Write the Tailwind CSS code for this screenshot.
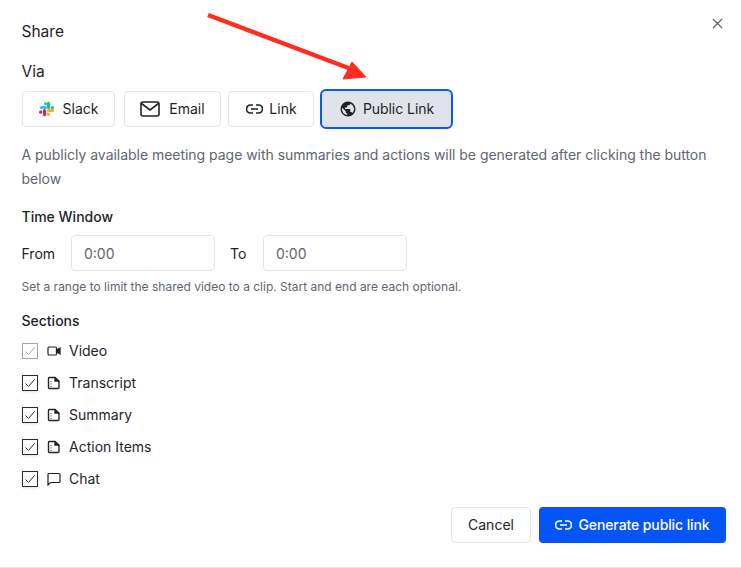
<!DOCTYPE html>
<html lang="en">
<head>
  <meta charset="UTF-8">
  <title>Share</title>
  <script src="https://cdn.jsdelivr.net/npm/@tailwindcss/browser@4"></script>
</head>
<body class="bg-white">
  <div class="relative w-[741px] h-[568px] overflow-hidden border-b border-[#e4e5e9] font-['Inter','Liberation_Sans',sans-serif] text-[#1f2329]">
    <!-- close -->
    <button class="absolute left-[712px] top-[18px] text-[#5b6070]">
      <svg class="w-[11px] h-[11px]" viewBox="0 0 11 11" fill="none" stroke="currentColor" stroke-width="1.2"><path d="M1 1l9 9M10 1l-9 9"/></svg>
    </button>

    <!-- annotation arrow -->
    <svg class="absolute left-0 top-0 pointer-events-none" width="741" height="568" fill="none">
      <path d="M208 15L351 69" stroke="#ff2d20" stroke-width="4.5"/>
      <path d="M366 77L343 79L352 62Z" fill="#ff2d20" stroke="#ff2d20" stroke-width="1"/>
    </svg>

    <div class="pl-[22px] pr-[15px] flex flex-col">
      <h2 class="mt-[22px] h-[20px] leading-[20px] text-[15.5px] -ml-[0.5px]">Share</h2>
      <div class="mt-[20px] h-[20px] leading-[20px] text-[15.5px] -ml-[0.5px]">Via</div>

      <div class="mt-[7px] h-[40px] flex items-center">
        <button class="w-[93px] h-[36px] pb-px flex items-center justify-center gap-[8px] border border-[#e4e5e9] rounded-[4px] text-[14px]">
          <svg class="w-[16px] h-[16px]" viewBox="0 0 16 16">
            <path d="M1.6 9.6a1.6 1.6 0 1 0 1.6 1.6V9.6H1.6z M4 9.6a1.5 1.5 0 0 1 3.2 0v4.1a1.6 1.6 0 1 1-3.2 0z" fill="#e01e5a"/>
            <path d="M6.4 1a1.6 1.6 0 1 0 0 3.2H8V2.6A1.6 1.6 0 0 0 6.4 1z M6.4 4.9H2.3a1.6 1.6 0 1 0 0 3.2h4.1a1.6 1.6 0 1 0 0-3.2z" fill="#36c5f0"/>
            <path d="M15 6.5a1.6 1.6 0 1 0-3.2 0v1.6h1.6A1.6 1.6 0 0 0 15 6.5z M11.1 6.4V2.3a1.6 1.6 0 1 0-3.2 0v4.1a1.6 1.6 0 1 0 3.2 0z" fill="#2eb67d"/>
            <path d="M9.5 15a1.6 1.6 0 1 0 0-3.2H7.9v1.6A1.6 1.6 0 0 0 9.5 15z M9.5 11.1h4.1a1.6 1.6 0 1 0 0-3.2H9.5a1.6 1.6 0 1 0 0 3.2z" fill="#ecb22e"/>
          </svg>
          <span>Slack</span>
        </button>
        <button class="ml-[9px] w-[97px] h-[36px] pb-px flex items-center justify-center gap-[9px] border border-[#e4e5e9] rounded-[4px] text-[14px]">
          <svg class="w-[20px] h-[16px]" viewBox="0 0 20 16" fill="none" stroke="#1f2329" stroke-width="1.6"><rect x="1" y="1" width="18" height="14" rx="2"/><path d="M1.5 2.5L10 9l8.5-6.5"/></svg>
          <span>Email</span>
        </button>
        <button class="ml-[7px] w-[86px] h-[36px] pb-px pl-px flex items-center justify-center gap-[6px] border border-[#e4e5e9] rounded-[4px] text-[14px]">
          <svg class="w-[17px] h-[10px]" viewBox="0 0 17 10" fill="none" stroke="#1f2329" stroke-width="1.7"><path d="M7 1H4.500a4 4 0 0 0 0 8H7M10 1h2.500a4 4 0 0 1 0 8H10M5 5h7"/></svg>
          <span>Link</span>
        </button>
        <button class="ml-[6px] w-[133px] h-[40px] pb-px flex items-center justify-center gap-[6px] border-2 border-[#0b57f5] rounded-[6px] bg-[#e0e3e9] text-[14px]">
          <svg class="w-[18px] h-[18px]" viewBox="0 0 24 24" fill="#1f2329"><path d="M12 2a10 10 0 1 0 0 20 10 10 0 0 0 0-20zM4 12c0-.6.1-1.200.2-1.800L9 15v1c0 1.100.9 2 2 2v1.900A8 8 0 0 1 4 12zm13.900 5.400c-.3-.8-1-1.400-1.900-1.400h-1v-3c0-.6-.4-1-1-1H8v-2h2c.6 0 1-.4 1-1V7h2c1.100 0 2-.9 2-2v-.4a8 8 0 0 1 2.900 12.800z"/></svg>
          <span class="tracking-[-0.05px]">Public Link</span>
        </button>
      </div>

      <p class="mt-[14px] -ml-[0.5px] text-[14px] leading-[24px] tracking-[-0.03px] text-[#5f6570] w-[700px]">A publicly available meeting page with summaries and actions will be generated after clicking the button below</p>

      <h3 class="mt-[17px] -ml-[0.5px] h-[18px] leading-[18px] text-[14px] font-medium">Time Window</h3>
      <div class="mt-[9px] h-[36px] flex items-center text-[14px]">
        <span class="w-[49px] -ml-[0.5px] mr-[0.5px]">From</span>
        <div class="w-[144px] h-[36px] pl-[12px] flex items-center border border-[#e4e5e9] rounded-[4px] text-[#5f6570]">0:00</div>
        <span class="ml-[15px] w-[33px]">To</span>
        <div class="w-[144px] h-[36px] pl-[12px] flex items-center border border-[#e4e5e9] rounded-[4px] text-[#5f6570]">0:00</div>
      </div>
      <p class="mt-[8px] -ml-[0.5px] h-[16px] leading-[16px] text-[12px] text-[#5f6570]">Set a range to limit the shared video to a clip. Start and end are each optional.</p>

      <h3 class="mt-[17px] -ml-[0.5px] h-[18px] leading-[18px] text-[14px] font-medium">Sections</h3>

      <ul class="mt-[5px] flex flex-col text-[14px]">
        <li class="h-[32px] flex items-center">
          <span class="w-[16px] h-[16px] border border-[#a3a5a8] flex items-center justify-center">
            <svg class="w-[12px] h-[12px]" viewBox="0 0 12 12" fill="none" stroke="#a3a5a8" stroke-width="1"><path d="M1.500 6.500L4.500 9.500L10.500 2.500"/></svg>
          </span>
          <svg class="ml-[9px] w-[14px] h-[14px]" viewBox="0 0 14 14" fill="none" stroke="#1f2329" stroke-width="1.200"><rect x="1" y="3" width="8.500" height="8" rx="1"/><path d="M9.500 6l3.500-2v6l-3.500-2z" fill="#1f2329"/></svg>
          <span class="ml-[8px] pb-px">Video</span>
        </li>
        <li class="h-[32px] flex items-center">
          <span class="w-[16px] h-[16px] border border-[#2a2d33] shadow-sm flex items-center justify-center">
            <svg class="w-[12px] h-[12px]" viewBox="0 0 12 12" fill="none" stroke="#2a2d33" stroke-width="1"><path d="M1.500 6.500L4.500 9.500L10.500 2.500"/></svg>
          </span>
          <svg class="ml-[9px] w-[14px] h-[14px]" viewBox="0 0 14 14" fill="none" stroke="#1f2329" stroke-width="1.400"><path d="M2.500 1.500H8L12 5v6.500a1 1 0 0 1-1 1H2.500a1 1 0 0 1-1-1v-9a1 1 0 0 1 1-1z"/><path d="M8 1.500V5h4" fill="#1f2329"/><path d="M4 5v.8M4 7.500v.8M4 10v.8" stroke-width="1"/></svg>
          <span class="ml-[8px] pb-px">Transcript</span>
        </li>
        <li class="h-[32px] flex items-center">
          <span class="w-[16px] h-[16px] border border-[#2a2d33] shadow-sm flex items-center justify-center">
            <svg class="w-[12px] h-[12px]" viewBox="0 0 12 12" fill="none" stroke="#2a2d33" stroke-width="1"><path d="M1.500 6.500L4.500 9.500L10.500 2.500"/></svg>
          </span>
          <svg class="ml-[9px] w-[14px] h-[14px]" viewBox="0 0 14 14" fill="none" stroke="#1f2329" stroke-width="1.400"><path d="M2.500 1.500H8L12 5v6.500a1 1 0 0 1-1 1H2.500a1 1 0 0 1-1-1v-9a1 1 0 0 1 1-1z"/><path d="M8 1.500V5h4" fill="#1f2329"/><path d="M4 5v.8M4 7.500v.8M4 10v.8" stroke-width="1"/></svg>
          <span class="ml-[8px] pb-px">Summary</span>
        </li>
        <li class="h-[32px] flex items-center">
          <span class="w-[16px] h-[16px] border border-[#2a2d33] shadow-sm flex items-center justify-center">
            <svg class="w-[12px] h-[12px]" viewBox="0 0 12 12" fill="none" stroke="#2a2d33" stroke-width="1"><path d="M1.500 6.500L4.500 9.500L10.500 2.500"/></svg>
          </span>
          <svg class="ml-[9px] w-[14px] h-[14px]" viewBox="0 0 14 14" fill="none" stroke="#1f2329" stroke-width="1.400"><path d="M2.500 1.500H8L12 5v6.500a1 1 0 0 1-1 1H2.500a1 1 0 0 1-1-1v-9a1 1 0 0 1 1-1z"/><path d="M8 1.500V5h4" fill="#1f2329"/><path d="M4 5v.8M4 7.500v.8M4 10v.8" stroke-width="1"/></svg>
          <span class="ml-[8px] pb-px">Action Items</span>
        </li>
        <li class="h-[32px] flex items-center">
          <span class="w-[16px] h-[16px] border border-[#2a2d33] shadow-sm flex items-center justify-center">
            <svg class="w-[12px] h-[12px]" viewBox="0 0 12 12" fill="none" stroke="#2a2d33" stroke-width="1"><path d="M1.500 6.500L4.500 9.500L10.500 2.500"/></svg>
          </span>
          <svg class="ml-[9px] w-[14px] h-[14px]" viewBox="0 0 14 14" fill="none" stroke="#1f2329" stroke-width="1.200"><path d="M2 1.500h10a1 1 0 0 1 1 1v7a1 1 0 0 1-1 1H3.500L1 13V2.500a1 1 0 0 1 1-1z"/></svg>
          <span class="ml-[8px] pb-px">Chat</span>
        </li>
      </ul>

      <div class="mt-[12px] flex justify-end gap-[8px] text-[14px]">
        <button class="w-[80px] h-[36px] pb-px border border-[#e4e5e9] rounded-[4px]">Cancel</button>
        <button class="w-[187px] h-[36px] pb-px flex items-center justify-center gap-[6px] rounded-[4px] bg-[#0554f8] text-white font-medium">
          <svg class="w-[17px] h-[10px]" viewBox="0 0 17 10" fill="none" stroke="#fff" stroke-width="1.700"><path d="M7 1H4.500a4 4 0 0 0 0 8H7M10 1h2.500a4 4 0 0 1 0 8H10M5 5h7"/></svg>
          <span class="tracking-[-0.1px]">Generate public link</span>
        </button>
      </div>
    </div>
  </div>
</body>
</html>
